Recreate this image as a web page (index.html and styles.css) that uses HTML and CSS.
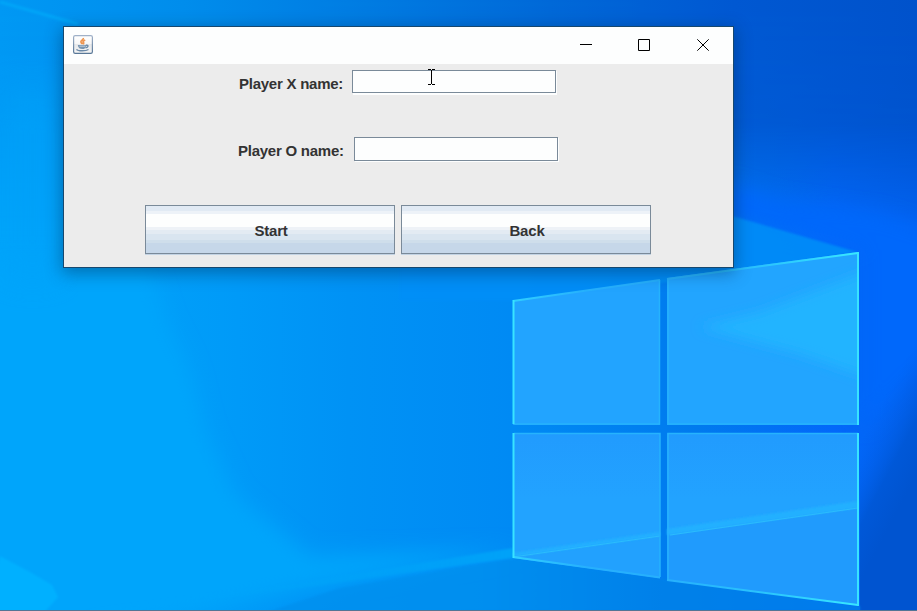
FILE: index.html
```
<!DOCTYPE html>
<html lang="en">
<head>
<meta charset="utf-8">
<title>Players</title>
<link rel="stylesheet" href="styles.css">
</head>
<body>
<main class="desktop">
  <svg class="wallpaper" viewBox="0 0 917 611" preserveAspectRatio="none" aria-hidden="true">
    <defs>
      <linearGradient id="sky" x1="0" y1="0" x2="917" y2="0" gradientUnits="userSpaceOnUse">
        <stop offset="0" stop-color="#00a4fa"/><stop offset=".15" stop-color="#00a0f9"/>
        <stop offset=".26" stop-color="#009af8"/><stop offset=".38" stop-color="#0092f5"/>
        <stop offset=".56" stop-color="#008af4"/><stop offset=".76" stop-color="#007aee"/>
        <stop offset=".91" stop-color="#0268fa"/><stop offset="1" stop-color="#0262f0"/>
      </linearGradient>
      <linearGradient id="top" x1="0" y1="0" x2="917" y2="0" gradientUnits="userSpaceOnUse">
        <stop offset="0" stop-color="#0098f4"/><stop offset=".2" stop-color="#008dec"/>
        <stop offset=".4" stop-color="#007be2"/><stop offset=".6" stop-color="#0068d8"/>
        <stop offset=".8" stop-color="#0058d2"/><stop offset="1" stop-color="#0052cb"/>
      </linearGradient>
      <linearGradient id="fade" x1="0" y1="0" x2="0" y2="225" gradientUnits="userSpaceOnUse">
        <stop offset="0" stop-color="#fff"/><stop offset=".55" stop-color="#fff" stop-opacity=".9"/>
        <stop offset="1" stop-color="#fff" stop-opacity="0"/>
      </linearGradient>
      <mask id="topmask"><rect width="917" height="225" fill="url(#fade)"/></mask>
      <linearGradient id="corner" x1="870" y1="425" x2="927" y2="455" gradientUnits="userSpaceOnUse">
        <stop offset="0" stop-color="#0262f0" stop-opacity="0"/><stop offset=".6" stop-color="#0058d8"/><stop offset="1" stop-color="#0054d0"/>
      </linearGradient>
      <linearGradient id="low" x1="480" y1="0" x2="660" y2="0" gradientUnits="userSpaceOnUse">
        <stop offset="0" stop-color="#0090ee"/><stop offset="1" stop-color="#0082e8"/>
      </linearGradient>
      <linearGradient id="pane" x1="0" y1="433" x2="0" y2="500" gradientUnits="userSpaceOnUse">
        <stop offset="0" stop-color="#219bfe"/><stop offset="1" stop-color="#22a3ff"/>
      </linearGradient>
      <linearGradient id="beam" x1="80" y1="0" x2="513" y2="0" gradientUnits="userSpaceOnUse">
        <stop offset="0" stop-color="#00a6fb" stop-opacity="0"/><stop offset="1" stop-color="#00a2f8"/>
      </linearGradient>
      <linearGradient id="edge" x1="667" y1="0" x2="858" y2="0" gradientUnits="userSpaceOnUse">
        <stop offset="0" stop-color="#26b0fd"/><stop offset=".5" stop-color="#2ac4fd"/><stop offset="1" stop-color="#38e8ff"/>
      </linearGradient>
      <linearGradient id="edge2" x1="513" y1="0" x2="660" y2="0" gradientUnits="userSpaceOnUse">
        <stop offset="0" stop-color="#30d0ff"/><stop offset=".5" stop-color="#26b0fd"/>
      </linearGradient>
      <clipPath id="pane2"><path d="M667 278 L858 252 V425 H667Z"/></clipPath>
      <filter id="soft" x="-20%" y="-20%" width="140%" height="140%"><feGaussianBlur stdDeviation="10"/></filter>
      <filter id="mist" x="-20%" y="-20%" width="140%" height="140%"><feGaussianBlur stdDeviation="6"/></filter>
      <filter id="slight"><feGaussianBlur stdDeviation="1"/></filter>
      <filter id="glow" x="-20%" y="-20%" width="140%" height="140%"><feGaussianBlur stdDeviation="18"/></filter>
    </defs>
    <rect width="917" height="611" fill="url(#sky)"/>
    <path d="M-40 240 H140 L165 320 L190 370 L205 430 L235 495 L310 555 L520 550 L300 590 L80 640 H-40Z" fill="#00a5fb" filter="url(#soft)"/>
    <rect width="917" height="225" fill="url(#top)" mask="url(#topmask)"/>
    <path d="M725 182 L780 200 L840 209 L880 214 L945 235 V350 L862 430 V250 L720 215Z" fill="#0268fb" filter="url(#soft)"/>
    <path d="M0 90 H65 V280 H0Z" fill="#00a2f9" opacity=".7" filter="url(#glow)"/>
    <path d="M860 300 H917 V611 H860Z" fill="url(#corner)"/>
    <path d="M725 214 L857 252 L667 282 L520 300 L400 300 V240Z" fill="#008ff8" opacity=".85" filter="url(#slight)"/>
    <path d="M270 611 L340 588 L513 558 L860 606 V611Z" fill="url(#low)" opacity=".75" filter="url(#slight)"/>
    <path d="M80 611 L300 583 L513 548 V558 L300 588 L115 611Z" fill="url(#beam)" filter="url(#slight)"/>
    <path d="M0 556 L30 572 L52 585 L58 597 L42 615 H-10Z" fill="#00b0ff" filter="url(#slight)"/>
    <path d="M0 2 L78 24" stroke="#05a5f8" stroke-width="3" fill="none" filter="url(#slight)"/>

    <path d="M513 301 L660 280 V425 H513Z" fill="#22a4ff"/>
    <path d="M667 278 L858 252 V425 H667Z" fill="#22a5ff"/>
    <g clip-path="url(#pane2)"><path d="M700 327 L760 312 L870 270 V378 L800 354Z" fill="#24b4ff" filter="url(#mist)"/></g>
    <path d="M513 433 H660 V578 L513 558Z" fill="url(#pane)"/>
    <path d="M667 433 H858 V605 L667 580Z" fill="url(#pane)"/>
    <path d="M513 557 L660 536 V578Z" fill="#22a1fe"/>
    <path d="M667 535 L858 508 V605 L667 580Z" fill="#209bfd"/>
    <path d="M513 553 L660 532 V536 L513 557Z M667 529 L858 501 V508 L667 535Z" fill="#24b0ff" filter="url(#slight)"/>
    <path d="M513 557 L660 536 M670 535 L858 508" fill="none" stroke="#2bbcfd" stroke-width="1"/>
    <g fill="none" stroke="#26b3fd" stroke-width="1.500">
      <path d="M659.500 280 V424 H514 M668 279 V424 H858 M514 433.500 H660 V577 M668 580 V433.500 H858"/>
    </g>
    <g fill="none" stroke-width="2">
      <path d="M513 301 L660 280 M513 557 L660 577.500" stroke="url(#edge2)"/>
      <path d="M667 279 L858 253 M667 580 L858 605" stroke="url(#edge)"/>
      <path d="M513.500 300 V424 M513.500 433 V558 M858 252 V425 M858 433 V606" stroke="#38e4ff"/>
    </g>
    <rect y="610" width="917" height="1" fill="#527595"/>
  </svg>

  <section class="window">
    <header class="titlebar">
      <svg class="app-icon" viewBox="0 0 20 20" aria-hidden="true">
        <defs><linearGradient id="tile" x2="0" y2="1"><stop stop-color="#fff"/><stop offset=".45" stop-color="#f7f7f7"/><stop offset=".5" stop-color="#e7e9eb"/><stop offset="1" stop-color="#f4f4f4"/></linearGradient>
        <linearGradient id="rim" x2="0" y2="1"><stop stop-color="#a0b1c8"/><stop offset="1" stop-color="#587797"/></linearGradient></defs>
        <rect x=".6" y=".6" width="18.800" height="17.800" rx="1.600" fill="url(#tile)" stroke="url(#rim)" stroke-width="1.200"/>
        <path d="M10.300 3 C11 5 7 5.500 8 7.300 C8.300 8.300 9.300 8.300 9.300 9.300 M12.200 5 C10 6 9.500 7 10.700 8 L10.200 9.400" fill="none" stroke="#ee9550" stroke-width="1.700"/>
        <path d="M4.800 9.900 H13 C13 13 11.500 14 9.300 14 C7 14 5 12.800 4.800 9.900Z" fill="#7895b1"/>
        <path d="M6.500 11.200 H12" stroke="#d2dde6" stroke-width=".8"/>
        <path d="M13 10.300 C16 9.800 15.500 12.300 12.500 12.800 M3.500 14.300 C5 16.300 13 16.200 15.500 14.500" fill="none" stroke="#6b8aa9" stroke-width="1.400"/>
      </svg>
      <div class="controls">
        <svg class="control" viewBox="0 0 12 12"><path d="M0 5.500H12"/></svg>
        <svg class="control" viewBox="0 0 12 12"><path d="M.5 .5H11.500V11.500H.5Z"/></svg>
        <svg class="control" viewBox="0 0 12 12"><path d="M.3 .3L11.700 11.700M11.700 .3L.3 11.700"/></svg>
      </div>
    </header>
    <form class="form">
      <div class="row row-x"><label class="label" for="px">Player X name:</label><input class="field" id="px" type="text"></div>
      <div class="row row-o"><label class="label" for="po">Player O name:</label><input class="field" id="po" type="text"></div>
      <div class="actions"><button class="button" type="button">Start</button><button class="button" type="button">Back</button></div>
    </form>
  </section>
  <svg class="cursor" viewBox="0 0 7 16" aria-hidden="true"><path d="M0 .5H3M4 .5H7M3.500 1V15M0 15.500H3M4 15.500H7"/></svg>
</main>
</body>
</html>
```
FILE: styles.css
```
* { box-sizing: border-box; }
body { margin: 0; overflow: hidden; font-family: "Liberation Sans", Arial, sans-serif; }
.desktop { position: relative; width: 917px; height: 611px; overflow: hidden; background: #0090f5; }
.wallpaper { display: block; width: 917px; height: 611px; }
.window {
  position: absolute; left: 63px; top: 26px; width: 671px; height: 242px;
  display: flex; flex-direction: column;
  border: 1px solid #16486f; background: #ececec;
  box-shadow: 0 4px 16px 1px rgba(0, 45, 85, .45);
}
.titlebar {
  height: 37px; flex: none; display: flex; justify-content: space-between;
  padding: 8px 24px 0 9px; background: #fdfefe;
}
.app-icon { width: 20px; height: 20px; }
.controls { display: flex; gap: 46px; padding-top: 4px; }
.control { width: 12px; height: 12px; fill: none; stroke: #000; stroke-width: 1; overflow: visible; }
.control:nth-child(2) { margin-right: 1px; }
.form { display: flex; flex-direction: column; flex: 1; padding-top: 6px; }
.row { display: flex; height: 25px; }
.row-x { padding-left: 175px; }
.row-o { margin-top: 42px; padding-left: 174px; }
.label { width: 113px; padding-top: 5px; font-size: 15px; letter-spacing: -.25px; line-height: 18px; font-weight: bold; color: #333; white-space: nowrap; }
.row-o .label { width: 116px; }
.field {
  width: 204px; height: 24px; margin: 0; padding: 2px; border: 1px solid #7a8a99;
  border-radius: 0; outline: 0; background: #fdfefe; box-shadow: 1px 1px 0 #fdfefe;
}
.row-x .field { height: 23px; box-shadow: 1px 1px 0 #fdfefe, 1px 2px 0 #fdfefe; }
.row-o .field { box-shadow: 1px 1px 0 #fdfefe; }
.actions { display: flex; gap: 6px; margin-top: 43px; padding-left: 81px; }
.button {
  width: 250px; height: 49px; margin: 0; padding: 1px 0 0 2px;
  border: 1px solid #7a8a99; border-radius: 0; color: #333;
  font: bold 15px "Liberation Sans", Arial, sans-serif; letter-spacing: -.2px;
  background: linear-gradient(#e1eaf4 0 5px, #edf2f8 5px 8px, #fdfefe 8px 21px, #eef2f7 21px 24px, #e3ebf3 24px 28px, #d9e5f0 28px 34px, #cfdeeb 34px 37px, #c6d7e9 37px);
  box-shadow: 0 1px 0 #c3d3e3;
}
.cursor { position: absolute; left: 428px; top: 69px; width: 7px; height: 16px; fill: none; stroke: #000; stroke-width: 1; }
```
